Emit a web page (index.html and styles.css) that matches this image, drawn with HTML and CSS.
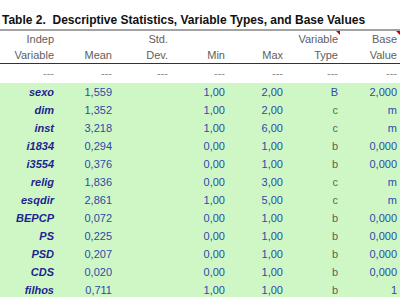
FILE: index.html
```html
<!DOCTYPE html>
<html lang="en">
<head>
    <meta charset="UTF-8">
    <title>Table 2</title>
    <link rel="stylesheet" href="styles.css">
</head>
<body>
    <div class="title">Table 2.&nbsp; Descriptive Statistics, Variable Types, and Base Values</div>
    <table class="stats">
        <colgroup>
            <col class="c-var">
            <col class="c-mean">
            <col class="c-sd">
            <col class="c-min">
            <col class="c-max">
            <col class="c-type">
            <col class="c-base">
        </colgroup>
        <thead>
            <tr class="head1">
                <th>Indep</th>
                <th></th>
                <th>Std.</th>
                <th></th>
                <th></th>
                <th class="note">Variable</th>
                <th class="note">Base</th>
            </tr>
            <tr class="head2">
                <th>Variable</th>
                <th>Mean</th>
                <th>Dev.</th>
                <th>Min</th>
                <th>Max</th>
                <th>Type</th>
                <th>Value</th>
            </tr>
            <tr class="dashes">
                <td>---</td><td>---</td><td>---</td><td>---</td><td>---</td><td>---</td><td>---</td>
            </tr>
        </thead>
        <tbody>
            <tr><td class="name">sexo</td><td>1,559</td><td></td><td>1,00</td><td>2,00</td><td>B</td><td>2,000</td></tr>
            <tr><td class="name">dim</td><td>1,352</td><td></td><td>1,00</td><td>2,00</td><td class="kind">c</td><td>m</td></tr>
            <tr><td class="name">inst</td><td>3,218</td><td></td><td>1,00</td><td>6,00</td><td class="kind">c</td><td>m</td></tr>
            <tr><td class="name">i1834</td><td>0,294</td><td></td><td>0,00</td><td>1,00</td><td class="kind">b</td><td>0,000</td></tr>
            <tr><td class="name">i3554</td><td>0,376</td><td></td><td>0,00</td><td>1,00</td><td class="kind">b</td><td>0,000</td></tr>
            <tr><td class="name">relig</td><td>1,836</td><td></td><td>0,00</td><td>3,00</td><td class="kind">c</td><td>m</td></tr>
            <tr><td class="name">esqdir</td><td>2,861</td><td></td><td>1,00</td><td>5,00</td><td class="kind">c</td><td>m</td></tr>
            <tr><td class="name">BEPCP</td><td>0,072</td><td></td><td>0,00</td><td>1,00</td><td class="kind">b</td><td>0,000</td></tr>
            <tr><td class="name">PS</td><td>0,225</td><td></td><td>0,00</td><td>1,00</td><td class="kind">b</td><td>0,000</td></tr>
            <tr><td class="name">PSD</td><td>0,207</td><td></td><td>0,00</td><td>1,00</td><td class="kind">b</td><td>0,000</td></tr>
            <tr><td class="name">CDS</td><td>0,020</td><td></td><td>0,00</td><td>1,00</td><td class="kind">b</td><td>0,000</td></tr>
            <tr><td class="name">filhos</td><td>0,711</td><td></td><td>1,00</td><td>1,00</td><td class="kind">b</td><td>1</td></tr>
        </tbody>
    </table>
</body>
</html>
```
FILE: styles.css
```css
body {
    margin: 0;
    padding: 0;
    background-color: white;
    font-family: "Liberation Sans", Arial, sans-serif;
    font-size: 11px;
    overflow: hidden;
}
.title {
    padding: 13px 0 0 2px;
    height: 16px;
    line-height: 15px;
    font-size: 12px;
    font-weight: bold;
    color: #111;
    border-bottom: 2px solid #a3a3a3;
}
.stats {
    width: 400px;
    table-layout: fixed;
    border-collapse: collapse;
}
.c-var { width: 56px; }
.c-mean { width: 58px; }
.c-sd { width: 56px; }
.c-min { width: 57px; }
.c-max { width: 58px; }
.c-type { width: 55px; }
.c-base { width: 60px; }
.stats th, .stats td {
    padding: 0 2px 0 0;
    text-align: right;
    white-space: nowrap;
}
.stats th:last-child, .stats td:last-child {
    padding-right: 3px;
}
.stats th {
    font-weight: normal;
    color: #606060;
}
.head1 th {
    height: 16px;
    line-height: 16px;
}
.head2 th {
    height: 16px;
    line-height: 16px;
    border-bottom: 1px solid #333;
}
.note {
    position: relative;
}
.note::after {
    content: "";
    position: absolute;
    top: 0;
    right: 0;
    border-top: 4px solid #d00000;
    border-left: 4px solid transparent;
}
.dashes td {
    height: 19px;
    line-height: 19px;
    color: #8a8a8a;
}
.stats tbody td {
    height: 18px;
    line-height: 18px;
    background-color: #cff7c6;
    color: #2d4aa8;
}
.stats tbody td.name {
    font-weight: bold;
    font-style: italic;
    color: #1c2490;
}
.stats tbody td.kind {
    color: #5b6656;
}
```
